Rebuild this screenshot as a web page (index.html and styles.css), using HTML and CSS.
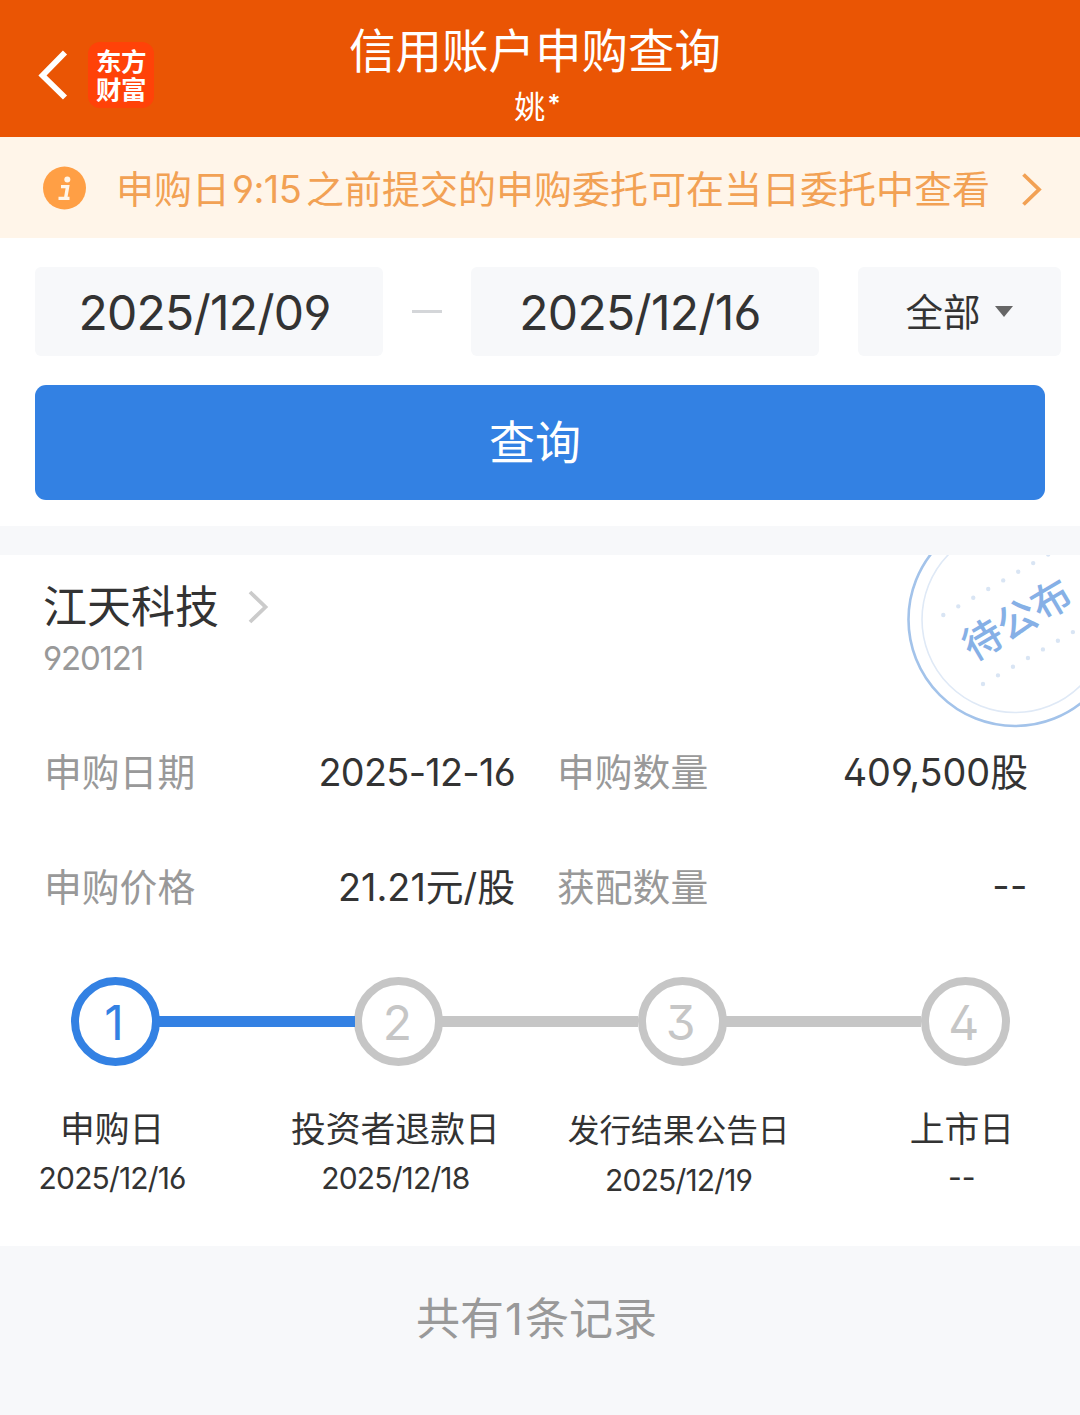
FILE: index.html
```html
<!DOCTYPE html>
<html lang="zh-CN">
<head>
<meta charset="UTF-8">
<title>信用账户申购查询</title>
<link rel="stylesheet" href="styles.css">
</head>
<body>
<header class="topbar">
  <div class="topbar-left">
    <svg class="back" width="32" height="52" viewBox="0 0 32 52"><path d="M27 3.500L4.500 26.500L27 48.500" fill="none" stroke="#fff" stroke-width="5.800"/></svg>
    <div class="logo"><span>东方</span><span>财富</span></div>
  </div>
  <div class="topbar-center">
    <h1 class="title">信用账户申购查询</h1>
    <div class="account">姚<span class="star">*</span></div>
  </div>
</header>

<div class="notice">
  <svg class="info" width="44" height="44" viewBox="0 0 44 44"><circle cx="22.500" cy="22" r="21.500" fill="#ff9f45"/><circle cx="25.300" cy="13.500" r="3" fill="#fff5e9"/><path d="M19 20.600H25.600L23.600 32.200M16.500 32.400H27.500" fill="none" stroke="#fff5e9" stroke-width="3.400"/></svg>
  <p class="notice-text">申购日<span class="notice-time">9:15</span>之前提交的申购委托可在当日委托中查看</p>
  <svg class="notice-arrow" width="24" height="36" viewBox="0 0 24 36"><path d="M3.500 2.500L19 17.500L3.500 32.500" fill="none" stroke="#f2a154" stroke-width="3.800"/></svg>
</div>

<section class="filter">
  <div class="filter-row">
    <div class="field date">2025/12/09</div>
    <div class="dash"></div>
    <div class="field date date-end">2025/12/16</div>
    <div class="field type"><span>全部</span><i class="caret"></i></div>
  </div>
  <button class="query">查询</button>
</section>

<section class="record">
  <svg class="stamp" width="180" height="180" viewBox="900 555 180 180">
    <circle cx="1015" cy="619.500" r="106.500" fill="none" stroke="#a3c3ea" stroke-width="2.600"/>
    <circle cx="1015" cy="619.500" r="93" fill="none" stroke="#dfe9f6" stroke-width="1.600"/>
    <path class="dots" d="M943.300 615L1064 545.300M983 684L1090 622.200"/>
    <text class="stamp-text" x="1016.500" y="634" text-anchor="middle" transform="rotate(-30.500 1016.500 619)">待公布</text>
  </svg>
  <div class="stock">
    <h2 class="stock-name">江天科技</h2>
    <svg width="24" height="36" viewBox="0 0 24 36"><path d="M3 3L18.500 18L3 33" fill="none" stroke="#cbcbcb" stroke-width="3.800"/></svg>
  </div>
  <div class="stock-code">920121</div>

  <dl class="facts">
    <div class="fact"><dt>申购日期</dt><dd class="v-date">2025-12-16</dd></div>
    <div class="fact"><dt>申购数量</dt><dd>409,500股</dd></div>
    <div class="fact"><dt>申购价格</dt><dd>21.21元/股</dd></div>
    <div class="fact"><dt>获配数量</dt><dd class="v-none">--</dd></div>
  </dl>

  <ol class="steps">
    <li class="step active">
      <div class="node">1</div>
      <div class="step-name">申购日</div>
      <div class="step-date">2025/12/16</div>
    </li>
    <li class="step">
      <div class="node">2</div>
      <div class="step-name">投资者退款日</div>
      <div class="step-date">2025/12/18</div>
    </li>
    <li class="step">
      <div class="node">3</div>
      <div class="step-name long">发行结果公告日</div>
      <div class="step-date low">2025/12/19</div>
    </li>
    <li class="step">
      <div class="node">4</div>
      <div class="step-name">上市日</div>
      <div class="step-date none">--</div>
    </li>
  </ol>
</section>

<footer class="total">共有<span class="total-num">1</span>条记录</footer>
</body>
</html>
```
FILE: styles.css
```css
* { box-sizing: border-box; margin: 0; padding: 0; }
body {
  width: 1080px;
  min-height: 1415px;
  display: flex;
  flex-direction: column;
  background: #f7f8fa;
  color: #333;
  font-family: Inter, "Noto Sans CJK SC", sans-serif;
  font-feature-settings: "ss01";
  overflow-x: hidden;
}
h1, h2 { font-weight: 400; }

.topbar {
  height: 137px;
  display: grid;
  grid-template-columns: 340px 390px 1fr;
  background: #ea5504;
  color: #fff;
}
.topbar-left { display: flex; align-items: center; gap: 18px; padding: 12px 0 0 38px; }
.logo {
  width: 66px;
  height: 66px;
  border-radius: 12px;
  background: #ff4208;
  display: flex;
  flex-direction: column;
  align-items: center;
  padding-top: 6px;
  font-size: 25.500px;
  font-weight: 700;
  line-height: 28px;
  letter-spacing: -0.500px;
}
.topbar-center { text-align: center; padding-top: 19px; }
.title { font-size: 46.500px; line-height: 64px; white-space: nowrap; }
.account { display: flex; justify-content: center; margin-top: 1px; padding-left: 5px; font-size: 31px; line-height: 46px; }
.star { margin-left: 2px; font-size: 25px; font-weight: 600; line-height: 40px; }

.notice {
  height: 101px;
  display: flex;
  align-items: center;
  padding: 0 36px 0 42px;
  background: #fff5e9;
  color: #f2a154;
}
.notice-text { flex: 1; padding: 2px 0 0 30px; font-size: 38px; line-height: 60px; white-space: nowrap; }
.notice-time { display: inline-block; width: 76px; padding-left: 2px; letter-spacing: -0.600px; }
.notice-arrow { margin-top: 4px; }

.filter { height: 288px; padding: 29px 35px 0; background: #fff; }
.filter-row { display: flex; align-items: center; width: 1026px; }
.field {
  height: 89px;
  border-radius: 6px;
  background: #f7f8fa;
  line-height: 89px;
}
.date { width: 348px; padding: 1px 9px 0 0; font-size: 48px; text-align: center; letter-spacing: -0.750px; }
.date-end { padding-right: 10px; }
.dash { width: 30px; height: 3px; margin: 0 29px; background: #d4d6d9; }
.type {
  width: 203px;
  margin-left: 39px;
  display: flex;
  align-items: center;
  justify-content: center;
  gap: 14px;
  padding: 1px 1px 0 0;
  font-size: 37.500px;
}
.caret { margin-top: -1px; border: 9px solid transparent; border-top: 11px solid #666; border-bottom: 0; }
.query {
  display: block;
  width: 1010px;
  height: 115px;
  margin-top: 29px;
  padding: 0 10px 8px 0;
  border: 0;
  border-radius: 11px;
  background: #3381e3;
  color: #fff;
  font: inherit;
  font-size: 46px;
}

.record {
  position: relative;
  height: 691px;
  margin-top: 29px;
  padding-top: 19px;
  background: #fff;
}
.stamp { position: absolute; top: 0; right: 0; }
.stamp-text { font-size: 39.500px; font-weight: 500; fill: #86b0e6; }
.dots { fill: none; stroke: #d9e5f4; stroke-width: 4.400; stroke-linecap: round; stroke-dasharray: 0 17.300; }
.stock { display: flex; align-items: center; gap: 28px; padding-left: 43px; }
.stock-name { font-size: 44px; line-height: 66px; }
.stock-code { padding-left: 43px; font-size: 33px; line-height: 36px; color: #999; letter-spacing: -1.200px; }

.facts {
  display: grid;
  grid-template-columns: 471px 471px;
  column-gap: 42px;
  row-gap: 55px;
  padding: 66px 0 0 44px;
  font-size: 37.800px;
  line-height: 60px;
}
.fact { display: flex; justify-content: space-between; white-space: nowrap; }
.fact dt { color: #999; }
.v-date { letter-spacing: -0.700px; }
.v-none { margin-top: -2px; letter-spacing: 0.500px; }

.steps { display: flex; width: 1133px; margin: 60px 0 0 -26px; list-style: none; }
.step { flex: 1; position: relative; display: flex; flex-direction: column; align-items: center; white-space: nowrap; }
.step + .step::before {
  content: "";
  position: absolute;
  top: 39px;
  right: calc(50% + 44px);
  width: 197px;
  height: 11px;
  background: #c6c6c6;
}
.step.active + .step::before { background: #3381e3; }
.node {
  width: 89px;
  height: 89px;
  border: 8.500px solid #c6c6c6;
  border-radius: 50%;
  padding-right: 3px;
  color: #c6c6c6;
  font-size: 48px;
  line-height: 75px;
  text-align: center;
}
.active .node { border-color: #3381e3; color: #3381e3; }
.step-name { height: 50px; margin-top: 38px; padding-right: 7px; font-size: 34.800px; line-height: 50px; }
.step-name.long { font-size: 31.700px; padding-top: 2px; }
.step-date { padding: 1px 7px 0 0; font-size: 30px; line-height: 46px; letter-spacing: -0.850px; }
.step-date.low { padding-top: 3px; }
.step-date.none { padding-top: 0; letter-spacing: 0; }

.total { flex: 1; padding: 40px 7px 0 0; font-size: 44px; line-height: 66px; text-align: center; color: #999; }
.total-num { margin: 0 2px 0 1px; }
```
